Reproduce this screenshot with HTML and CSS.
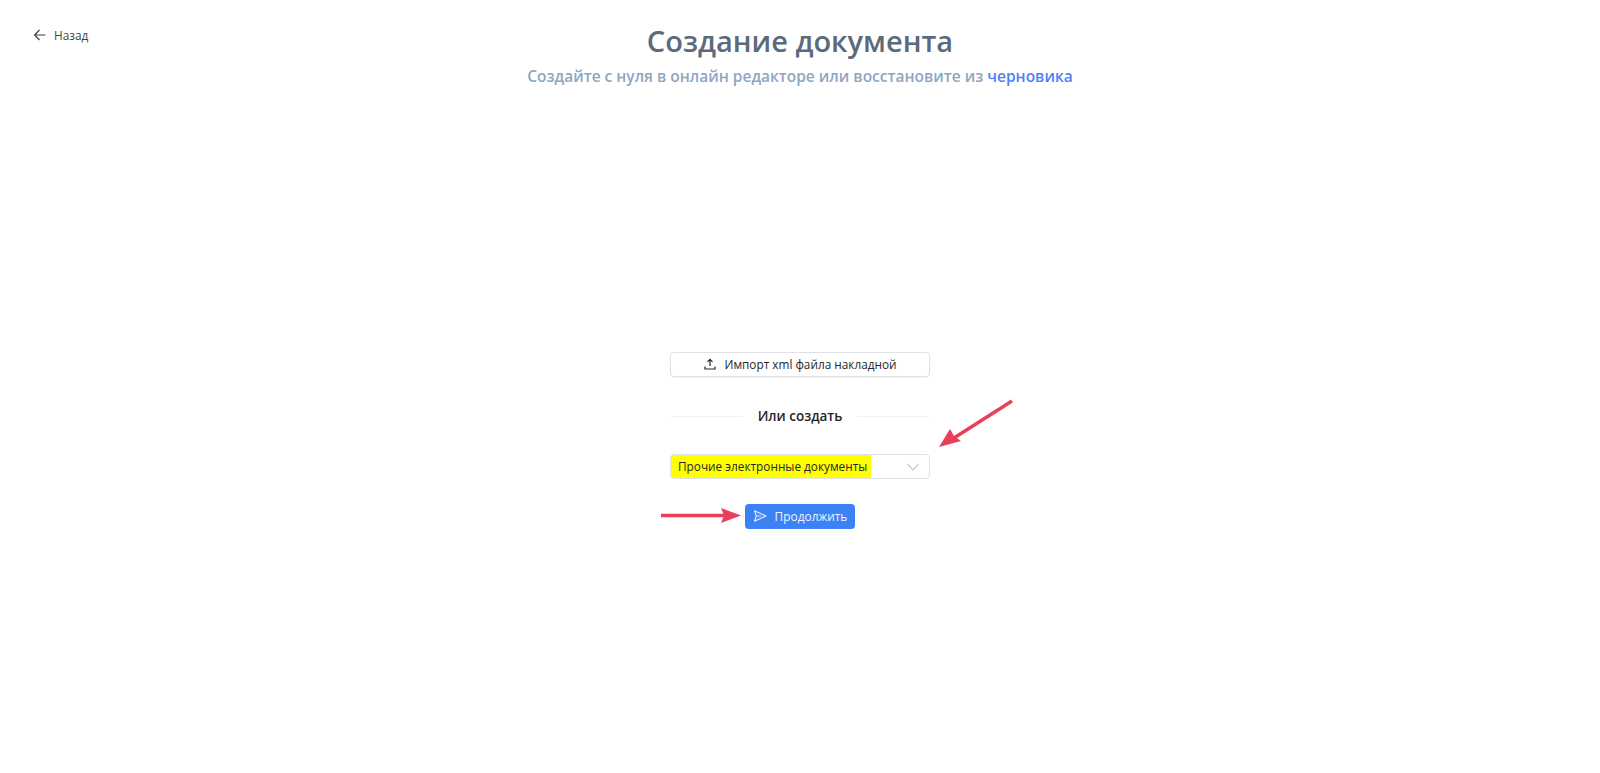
FILE: index.html
```html
<!DOCTYPE html>
<html lang="ru">
<head>
  <meta charset="UTF-8" />
  <title>Создание документа</title>
  <link rel="stylesheet" href="styles.css">
</head>
<body>
  <div class="page">
    <header class="top">
      <a class="back" href="#">
        <svg width="14" height="14" viewBox="0 0 14 14" fill="none" stroke="#3f3f46" stroke-width="1.2"><path d="M12.5 7H1.8M6.5 2 1.6 7l4.9 5"/></svg>
        <span>Назад</span>
      </a>
      <div class="heading">
        <h1>Создание документа</h1>
        <p>Создайте с нуля в онлайн редакторе или восстановите из <a href="#">черновика</a></p>
      </div>
    </header>

    <main class="form">
      <button class="import" type="button">
        <svg width="14" height="14" viewBox="0 0 14 14" fill="none" stroke="#27272a" stroke-width="1.2"><path d="M7 9V2.500M4.500 4.800 7 2.300l2.500 2.500M2 9.500v2.500h10V9.500"/></svg>
        <span>Импорт xml файла накладной</span>
      </button>

      <div class="divider"><span>Или создать</span></div>

      <div class="select">
        <span class="select-value">Прочие электронные документы</span>
        <svg width="14" height="14" viewBox="0 0 14 14" fill="none" stroke="#bfc4cc" stroke-width="1.1"><path d="M1.5 4.2 7 10l5.500-5.800"/></svg>
      </div>

      <button class="submit" type="button">
        <svg width="14" height="14" viewBox="0 0 14 14" fill="none" stroke="#e6eeff" stroke-width="1.1" stroke-linejoin="round"><path d="M1.500 1.800 13 7 1.500 12.200 3.400 7zM3.400 7H8"/></svg>
        <span>Продолжить</span>
      </button>
    </main>
  </div>

  <!-- red arrows drawn on top of the screenshot -->
  <svg class="arrows" width="1600" height="773" viewBox="0 0 1600 773">
    <path d="M1012 401 950 440.500" stroke="#e8405a" stroke-width="3.500" fill="none"/>
    <path d="M939 447 950 429 954 436 961 441z" fill="#e8405a"/>
    <path d="M661 515.500H724" stroke="#e8405a" stroke-width="3.500" fill="none"/>
    <path d="M741 515.500 721 508 724 515.500 721 523z" fill="#e8405a"/>
  </svg>
</body>
</html>
```

FILE: styles.css
```css
* {
  box-sizing: border-box;
}
body {
  margin: 0;
  background: #fff;
  font-family: "Open Sans", "Noto Sans", sans-serif;
  color: #27272a;
}
.page {
  width: 1600px;
  height: 773px;
  overflow: hidden;
}

.top {
  display: grid;
  grid-template-columns: 1fr auto 1fr;
  padding-top: 20px;
}
.back {
  grid-column: 1;
  display: flex;
  align-items: center;
  align-self: start;
  gap: 7px;
  margin: 6px 0 0 33px;
  font-size: 11.800px;
  line-height: 18px;
  color: #3f3f46;
  text-decoration: none;
}
.heading {
  grid-column: 2;
  text-align: center;
}
h1 {
  margin: 0;
  font-size: 29px;
  line-height: 42px;
  font-weight: 600;
  color: #5b6b7c;
}
.heading p {
  margin: 2px 0 0;
  font-size: 15.500px;
  line-height: 24px;
  font-weight: 600;
  color: #8ea6c1;
}
.heading a {
  color: #4f80fb;
  text-decoration: none;
}

.form {
  width: 260px;
  margin: 264px auto 0;
  display: flex;
  flex-direction: column;
  align-items: center;
}
.import {
  width: 100%;
  height: 25px;
  display: flex;
  align-items: center;
  justify-content: center;
  gap: 7px;
  padding: 0 0 1px;
  background: #fff;
  border: 1px solid #dfe1e6;
  border-radius: 4px;
  box-shadow: 0 1px 2px rgba(0, 0, 0, 0.05);
  font: inherit;
  font-size: 11.800px;
  color: #27272a;
}
.divider {
  width: 100%;
  display: flex;
  align-items: center;
  gap: 15px;
  margin-top: 29px;
  font-size: 13.500px;
  line-height: 20px;
  font-weight: 600;
}
.divider::before,
.divider::after {
  content: "";
  flex: 1;
  border-top: 1px solid #f1f2f4;
}
.select {
  width: 100%;
  height: 25px;
  margin-top: 28px;
  display: flex;
  align-items: center;
  justify-content: space-between;
  padding-right: 9px;
  background: #fff;
  border: 1px solid #dfe1e6;
  border-radius: 4px;
  font-size: 11.800px;
}
.select-value {
  height: 23px;
  width: 200px;
  padding-left: 7px;
  line-height: 23px;
  white-space: nowrap;
  background: #ffff00;
  color: #27272a;
  border-radius: 3px 0 0 3px;
}
.submit {
  width: 110px;
  height: 25px;
  margin-top: 25px;
  display: flex;
  align-items: center;
  justify-content: center;
  gap: 8px;
  padding: 0 0 2px;
  background: #3b82f6;
  border: none;
  border-radius: 4px;
  font: inherit;
  font-size: 11.900px;
  color: #eef4ff;
}

.arrows {
  position: absolute;
  top: 0;
  left: 0;
  pointer-events: none;
}
```
